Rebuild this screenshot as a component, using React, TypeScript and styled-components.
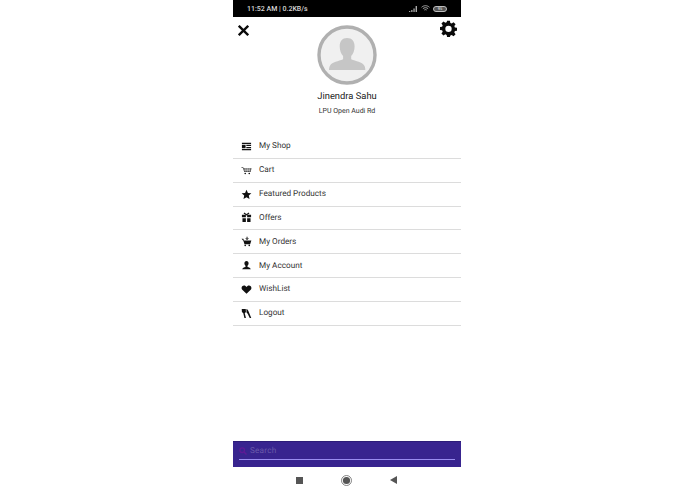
import React from "react";
import styled, { createGlobalStyle } from "styled-components";

const Global = createGlobalStyle`
  html, body { margin: 0; padding: 0; background: #fff; }
  body { font-family: Roboto, "Liberation Sans", sans-serif; text-rendering: geometricPrecision; }
  svg { display: block; }
`;

const Phone = styled.div`
  width: 228px;
  height: 494px;
  margin-left: 233px;
  display: flex;
  flex-direction: column;
  background: #fff;
`;

const StatusBar = styled.div`
  height: 17px;
  background: #000;
  color: #d8d8d8;
  display: flex;
  align-items: center;
  justify-content: space-between;
  padding: 0 14px;
  font-size: 7px;
  font-weight: 500;
`;

const StatusIcons = styled.div`
  display: flex;
  align-items: center;
  gap: 3px;
`;

const Battery = styled.span`
  width: 14px;
  height: 6px;
  box-sizing: border-box;
  border: 1px solid #bdbdbd;
  border-radius: 3px;
  background: #555;
  color: #ddd;
  font-size: 4px;
  line-height: 4px;
  text-align: center;
`;

const Header = styled.div`
  height: 118px;
  display: grid;
  grid-template-columns: 32px 1fr 32px;
`;

const Close = styled.div`
  padding: 8px 0 0 5px;
`;

const Gear = styled.div`
  padding: 3px 0 0 11px;
`;

const Profile = styled.div`
  display: flex;
  flex-direction: column;
  align-items: center;
  padding-top: 8px;
`;

const Name = styled.div`
  margin-top: 5px;
  font-size: 9.4px;
  line-height: 14px;
  color: #222;
`;

const Address = styled.div`
  margin-top: 1px;
  font-size: 7px;
  line-height: 12px;
  color: #333;
`;

const Menu = styled.div`
  display: flex;
  flex-direction: column;
`;

const Row = styled.div`
  height: 22.85px;
  display: flex;
  align-items: center;
  border-bottom: 1px solid #dcdcdc;
`;

const IconSlot = styled.div`
  width: 26px;
  display: flex;
  justify-content: center;
  padding-left: 1px;
  box-sizing: border-box;
`;

const Label = styled.div`
  font-size: 8.2px;
  color: #333;
`;

const Spacer = styled.div`
  flex: 1;
`;

const SearchBar = styled.div`
  height: 26px;
  background: #38248f;
  border-top: 1px solid #2c1c78;
  box-sizing: border-box;
  padding: 0 6px;
  display: flex;
  flex-direction: column;
`;

const SearchLine = styled.div`
  height: 17px;
  display: flex;
  align-items: center;
  gap: 3px;
  border-bottom: 1px solid #9a8df0;
`;

const SearchText = styled.span`
  font-size: 8.2px;
  color: #6a5aaa;
  letter-spacing: 0.2px;
`;

const NavBar = styled.div`
  height: 27px;
  display: flex;
  align-items: center;
  justify-content: center;
  gap: 38px;
  padding: 0 1px 1px 0;
  box-sizing: border-box;
`;

const I = ({ children, w = 11 }: { children: React.ReactNode; w?: number }) => (
  <svg width={w} height={w} viewBox="0 0 12 12" fill="#111">{children}</svg>
);

const icons: Record<string, React.ReactNode> = {
  shop: (
    <I>
      <path d="M1 2h10v1.300H1zM1 4.200h4v3.600H1zM5.800 4.200H11v1.300H5.800zM5.800 6.500H11v1.300H5.800zM1 8.700h10V10H1z" />
    </I>
  ),
  cart: (
    <I>
      <path d="M0.500 2.500h2l.3 1h8.700l-1 4.200H3.600L2 3.400H.5z" fillOpacity=".8" />
      <path d="M3 4.700h7.500M3.400 6h7M5.300 3.500v4M7.200 3.500v4M9.100 3.500v4" stroke="#fff" strokeWidth=".45" />
      <circle cx="4.600" cy="9.300" r=".9" />
      <circle cx="9" cy="9.300" r=".9" />
    </I>
  ),
  star: (
    <I>
      <path d="M6 .9l1.550 3.400 3.750.4-2.800 2.500.8 3.700L6 9l-3.300 1.900.8-3.700L.7 4.700l3.750-.4z" />
    </I>
  ),
  gift: (
    <I>
      <path d="M1 3h4.300v2.600H1zM6.700 3H11v2.600H6.700zM1.600 6.700h3.700V11H1.600zM6.700 6.700h3.700V11H6.700z" />
      <path d="M3.200 1.200L6 3l2.800-1.800" fill="none" stroke="#111" strokeWidth="1.300" />
    </I>
  ),
  orders: (
    <I>
      <path d="M2.500 5h8.800l-1.300 4H3.800zM.6 3h2l.6 2h-1z" />
      <path d="M6.600 .8v2.800M5.200 2.300L6.600 4 8 2.300" fill="none" stroke="#111" strokeWidth="1" />
      <circle cx="4.600" cy="10.300" r=".9" />
      <circle cx="9" cy="10.300" r=".9" />
    </I>
  ),
  account: (
    <I>
      <path d="M6 1c1.500 0 2.300 1.100 2.300 2.600 0 1.200-.6 2.200-1.200 2.800v1.100c1.600.5 3.300 1 3.600 2.500H1.300c.3-1.500 2-2 3.600-2.500V6.400C4.300 5.800 3.700 4.800 3.700 3.600 3.700 2.100 4.500 1 6 1z" />
    </I>
  ),
  heart: (
    <I>
      <path d="M6 10.600L1.400 6.200C-.2 4.500.9 1.700 3.300 1.700c1.200 0 2.100.7 2.700 1.600.6-.9 1.500-1.600 2.700-1.600 2.400 0 3.500 2.800 1.900 4.500z" />
    </I>
  ),
  logout: (
    <I>
      <path d="M.8 1h4.400l.2 3.300-1.300 1.300 1.300 5.400H3.700L2.500 5.800 1 4.400z" />
      <path d="M5.900 1.200c1.200.3 2 1.500 2.500 3L11.200 11H9.500L7.300 6.300 6 5z" />
    </I>
  ),
};

const items: [string, string][] = [
  ["shop", "My Shop"],
  ["cart", "Cart"],
  ["star", "Featured Products"],
  ["gift", "Offers"],
  ["orders", "My Orders"],
  ["account", "My Account"],
  ["heart", "WishList"],
  ["logout", "Logout"],
];

export default function App() {
  return (
    <Phone>
      <Global />
      <StatusBar>
        <span>11:52 AM | 0.2KB/s</span>
        <StatusIcons>
          <svg width="9" height="6" viewBox="0 0 9 6" fill="#aaa">
            <path d="M0 6V5h1.300v1zM2.200 6V4h1.300v2zM4.400 6V2.500h1.300V6zM6.600 6V0H8v6z" />
          </svg>
          <svg width="9" height="7" viewBox="0 0 10 8" fill="none" stroke="#bbb" strokeWidth="1">
            <path d="M.5 2.600c2.600-2.400 6.400-2.400 9 0M2 4.200c1.800-1.500 4.200-1.500 6 0M3.600 5.800c.8-.7 2-.7 2.800 0" />
          </svg>
          <Battery>95</Battery>
        </StatusIcons>
      </StatusBar>
      <Header>
        <Close>
          <svg width="11" height="11" viewBox="0 0 11 11" stroke="#0a0a0a" strokeWidth="2.300" strokeLinecap="square">
            <path d="M1.600 1.600l7.800 7.800M9.400 1.600l-7.800 7.800" />
          </svg>
        </Close>
        <Profile>
          <svg width="60" height="60" viewBox="0 0 60 60">
            <defs>
              <clipPath id="avatarClip">
                <circle cx="30" cy="30" r="26" />
              </clipPath>
            </defs>
            <circle cx="30" cy="30" r="28" fill="#f0f0f0" stroke="#b0b0b0" strokeWidth="3.400" />
            <g clipPath="url(#avatarClip)">
              <path d="M30 13c5 0 7.600 3.400 7.600 8.400 0 4-1.400 7.200-3.400 9.600v3.200c4.600 2 11 2.800 13 6.200.9 1.600 1.100 2.600 1.100 4.600H12c0-2 .3-3 1.100-4.600 2-3.400 8.400-4.200 13-6.200V31c-2-2.400-3.400-5.600-3.400-9.600 0-5 2.600-8.400 7.300-8.400z" fill="#c6c6c6" />
            </g>
          </svg>
          <Name>Jinendra Sahu</Name>
          <Address>LPU Open Audi Rd</Address>
        </Profile>
        <Gear>
          <svg width="17" height="17" viewBox="0 0 24 24" fill="#0a0a0a">
            <path fillRule="evenodd" d="M10 1h4l.6 3.100 1.900.8L19.100 3.100 22 6l-1.800 2.600.8 1.900L24 11v4l-3 .6-.8 1.900 1.800 2.600-2.900 2.800-2.600-1.800-1.900.8L14 24h-4l-.6-3-1.900-.8-2.600 1.800L2 19.100l1.800-2.600-.8-1.900L0 14v-4l3-.6.8-1.900L2 5 4.900 2.100 7.500 3.900l1.900-.8zM12 8a4.500 4.500 0 1 0 0 9 4.500 4.500 0 0 0 0-9z" />
          </svg>
        </Gear>
      </Header>
      <Menu>
        {items.map(([k, t]) => (
          <Row key={k}>
            <IconSlot>{icons[k]}</IconSlot>
            <Label>{t}</Label>
          </Row>
        ))}
      </Menu>
      <Spacer />
      <SearchBar>
        <SearchLine>
          <svg width="8" height="8" viewBox="0 0 8 8" fill="none" stroke="#5c1a96" strokeWidth="1.400">
            <circle cx="3.200" cy="3.200" r="2.300" />
            <path d="M5 5l2.500 2.500" />
          </svg>
          <SearchText>Search</SearchText>
        </SearchLine>
      </SearchBar>
      <NavBar>
        <svg width="7" height="7" viewBox="0 0 7 7" fill="#555">
          <rect width="7" height="7" />
        </svg>
        <svg width="11" height="11" viewBox="0 0 11 11">
          <circle cx="5.500" cy="5.500" r="5" fill="none" stroke="#666" strokeWidth=".8" />
          <circle cx="5.500" cy="5.500" r="3.600" fill="#555" />
        </svg>
        <svg width="7" height="8" viewBox="0 0 7 8" fill="#555">
          <path d="M7 0v8L0 4z" />
        </svg>
      </NavBar>
    </Phone>
  );
}
